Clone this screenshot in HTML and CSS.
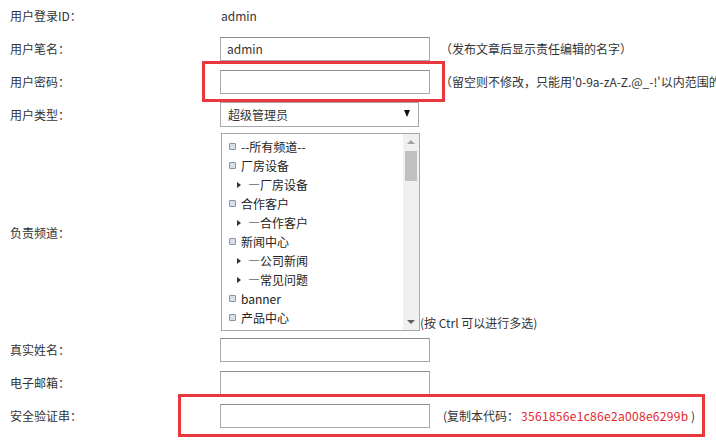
FILE: index.html
```html
<!DOCTYPE html>
<html lang="zh-CN">
<head>
    <meta charset="UTF-8">
    <title>编辑用户</title>
    <link rel="stylesheet" href="styles.css">
</head>
<body>
    <div class="user-form">
        <div class="form-row">
            <div class="label">用户登录ID：</div>
            <div class="field"><span class="plain">admin</span></div>
        </div>
        <div class="form-row">
            <div class="label">用户笔名：</div>
            <div class="field">
                <input class="text-input" type="text" value="admin">
                <span class="hint">（发布文章后显示责任编辑的名字）</span>
            </div>
        </div>
        <div class="form-row">
            <div class="label">用户密码：</div>
            <div class="field field-clip">
                <input class="text-input" type="password">
                <span class="hint">（留空则不修改，只能用'0-9a-zA-Z.@_-!'以内范围的字符）</span>
            </div>
            <div class="mark mark-pwd"></div>
        </div>
        <div class="form-row">
            <div class="label">用户类型：</div>
            <div class="field">
                <div class="select-box">
                    <span>超级管理员</span>
                    <span class="caret"></span>
                </div>
            </div>
        </div>
        <div class="form-row channel-row">
            <div class="label">负责频道：</div>
            <div class="field field-bottom">
                <div class="list-box">
                    <ul class="options">
                        <li class="top">--所有频道--</li>
                        <li class="top">厂房设备</li>
                        <li class="sub">—厂房设备</li>
                        <li class="top">合作客户</li>
                        <li class="sub">—合作客户</li>
                        <li class="top">新闻中心</li>
                        <li class="sub">—公司新闻</li>
                        <li class="sub">—常见问题</li>
                        <li class="top">banner</li>
                        <li class="top">产品中心</li>
                    </ul>
                    <div class="scrollbar">
                        <span class="arrow-up"></span>
                        <span class="thumb"></span>
                        <span class="arrow-down"></span>
                    </div>
                </div>
                <span class="ctrl-hint">(按 Ctrl 可以进行多选)</span>
            </div>
        </div>
        <div class="form-row">
            <div class="label">真实姓名：</div>
            <div class="field"><input class="text-input" type="text"></div>
        </div>
        <div class="form-row">
            <div class="label">电子邮箱：</div>
            <div class="field"><input class="text-input" type="text"></div>
        </div>
        <div class="form-row">
            <div class="label">安全验证串：</div>
            <div class="field">
                <input class="text-input" type="text">
                <span class="hint code-hint">(复制本代码：<span class="code">3561856e1c86e2a008e6299b</span> )</span>
            </div>
            <div class="mark mark-code"></div>
        </div>
    </div>
</body>
</html>
```

FILE: styles.css
```css
html, body {
    overflow: hidden;
}

body {
    margin: 0;
    padding: 0;
    background-color: #fff;
    font-family: "Noto Sans CJK SC", "Microsoft YaHei", sans-serif;
    font-size: 12px;
    color: #333;
}

.user-form {
    display: flex;
    flex-direction: column;
    padding-bottom: 12px;
}

.form-row {
    position: relative;
    display: flex;
    align-items: center;
    height: 33px;
}

.form-row:first-child {
    margin-top: -1px;
}

.label {
    width: 210px;
    padding-left: 10px;
    flex-shrink: 0;
}

.field {
    display: flex;
    align-items: center;
    white-space: nowrap;
}

.field-clip {
    flex: 1;
    min-width: 0;
    overflow: hidden;
}

.plain {
    padding-left: 1px;
}

.text-input {
    box-sizing: border-box;
    width: 210px;
    height: 24px;
    margin: 0;
    padding: 0 6px;
    border: 1px solid #a9a9a9;
    border-top-color: #8e8e8e;
    font-family: inherit;
    font-size: 12px;
    color: #333;
    outline: none;
    flex-shrink: 0;
}

.hint {
    margin-left: 10px;
}

.code-hint {
    margin-left: 13px;
}

.code {
    color: #e5262b;
    margin-left: 2px;
    letter-spacing: 0.3px;
}

.select-box {
    box-sizing: border-box;
    width: 199px;
    height: 25px;
    border: 1px solid #a9a9a9;
    display: flex;
    align-items: center;
    justify-content: space-between;
    padding: 0 8px 0 7px;
}

.caret {
    border-top: 7px solid #111;
    border-left: 3px solid transparent;
    border-right: 3px solid transparent;
    margin-top: -2px;
}

.channel-row {
    height: 202px;
}

.field-bottom {
    align-items: flex-end;
}

.list-box {
    box-sizing: border-box;
    width: 199px;
    height: 198px;
    margin-left: 1px;
    border: 1px solid #a9a9a9;
    display: flex;
    overflow: hidden;
}

.options {
    list-style: none;
    margin: 0;
    padding: 3px 0 0 0;
    flex: 1;
}

.options li {
    height: 19px;
    line-height: 19px;
    position: relative;
    color: #222;
}

.options .top {
    padding-left: 19px;
}

.options .top::before {
    content: "";
    position: absolute;
    left: 7px;
    top: 6px;
    width: 5px;
    height: 5px;
    border: 1px solid #8793a8;
    border-radius: 1px;
    background-color: #d9dfea;
}

.options .sub {
    padding-left: 26px;
}

.options .sub::before {
    content: "";
    position: absolute;
    left: 15px;
    top: 7px;
    border-left: 4px solid #333;
    border-top: 3px solid transparent;
    border-bottom: 3px solid transparent;
}

.scrollbar {
    width: 16px;
    background-color: #f0f0f0;
    display: flex;
    flex-direction: column;
    align-items: center;
}

.arrow-up {
    margin-top: 6px;
    border-bottom: 4px solid #a3a3a3;
    border-left: 4px solid transparent;
    border-right: 4px solid transparent;
}

.thumb {
    width: 12px;
    height: 30px;
    margin-top: 7px;
    background-color: #c1c1c1;
}

.arrow-down {
    margin-top: auto;
    margin-bottom: 6px;
    border-top: 4px solid #606060;
    border-left: 4px solid transparent;
    border-right: 4px solid transparent;
}

.ctrl-hint {
    line-height: 16px;
}

.mark {
    position: absolute;
    border: 3px solid #e8383d;
    box-sizing: border-box;
    pointer-events: none;
}

.mark-pwd {
    left: 202px;
    top: -4px;
    width: 243px;
    height: 41px;
}

.mark-code {
    left: 178px;
    top: -5px;
    width: 527px;
    height: 43px;
}
```
